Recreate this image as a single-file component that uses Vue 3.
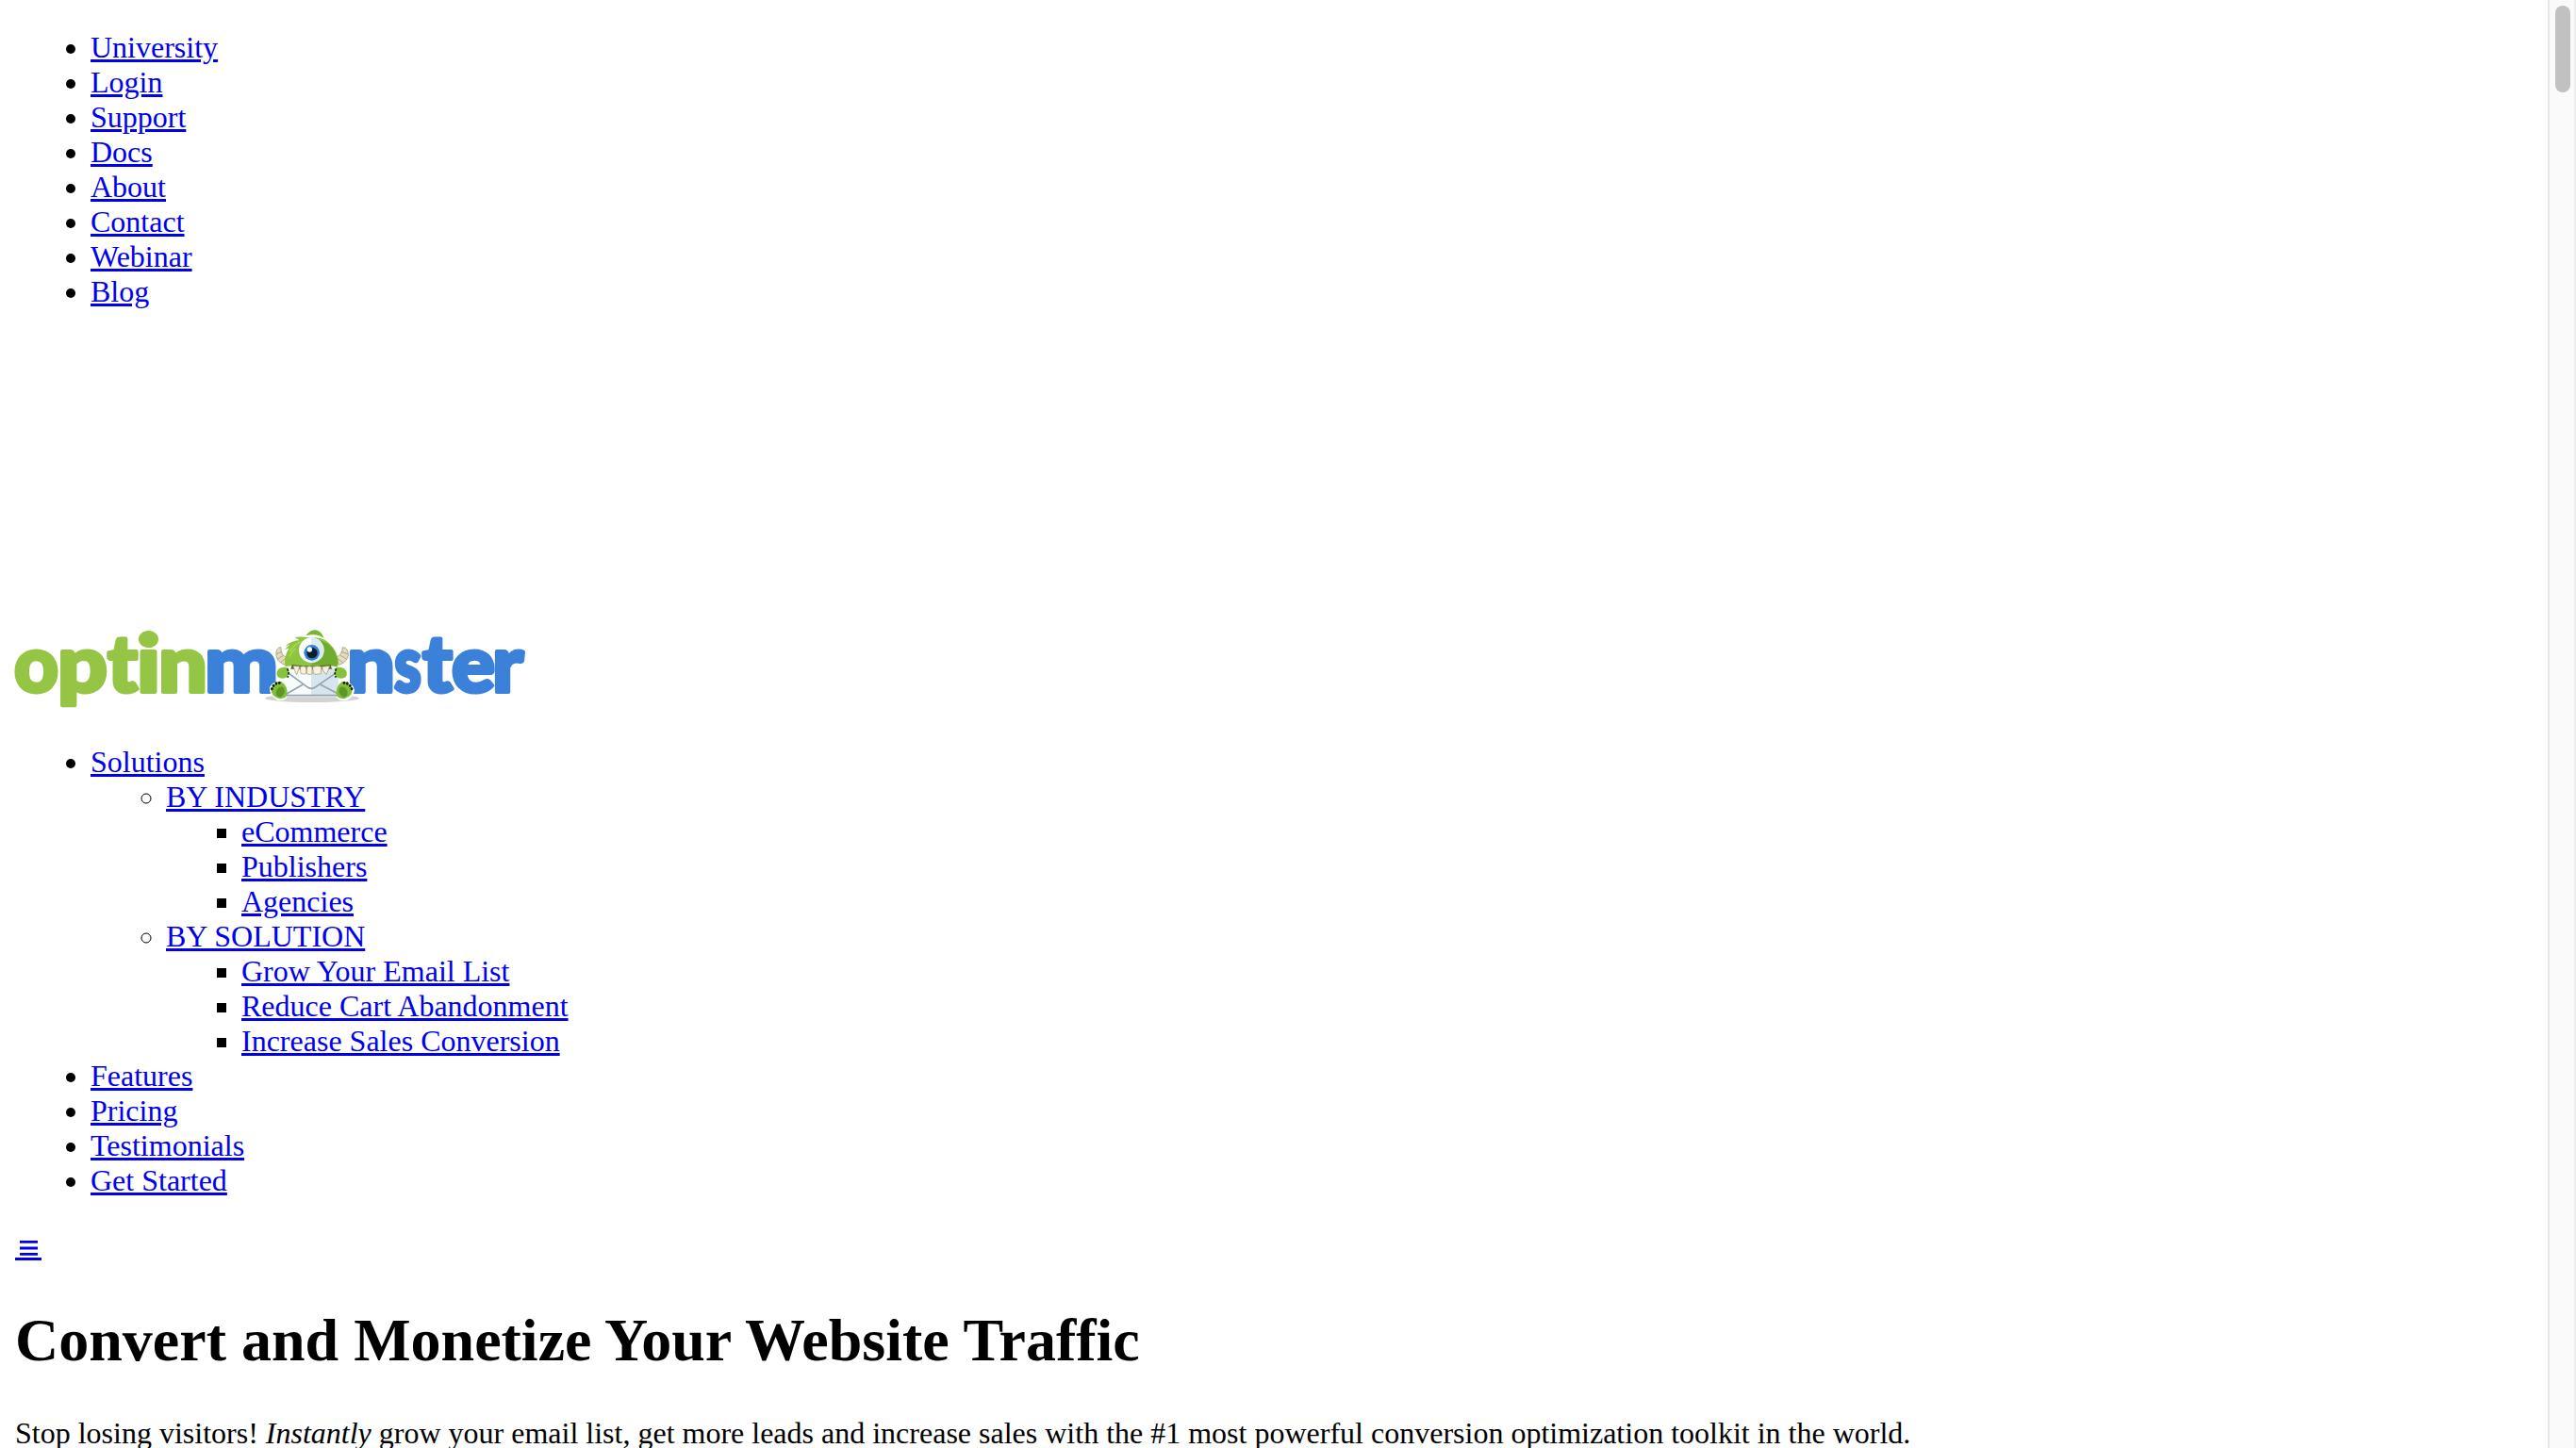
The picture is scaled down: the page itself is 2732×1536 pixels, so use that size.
<script setup>
const topLinks = ['University', 'Login', 'Support', 'Docs', 'About', 'Contact', 'Webinar', 'Blog']

const mainLinks = [
  {
    label: 'Solutions',
    groups: [
      { label: 'BY INDUSTRY', items: ['eCommerce', 'Publishers', 'Agencies'] },
      { label: 'BY SOLUTION', items: ['Grow Your Email List', 'Reduce Cart Abandonment', 'Increase Sales Conversion'] }
    ]
  },
  { label: 'Features' },
  { label: 'Pricing' },
  { label: 'Testimonials' },
  { label: 'Get Started' }
]

// x and advance of every wordmark letter
const letters = [
  { c: 'o', x: 15, w: 47, green: true },
  { c: 'p', x: 61, w: 53, green: true },
  { c: 't', x: 114, w: 32, green: true },
  { c: 'i', x: 145, w: 25, green: true },
  { c: 'n', x: 168, w: 52, green: true },
  { c: 'm', x: 217, w: 78 },
  { c: 'n', x: 368, w: 51 },
  { c: 's', x: 418, w: 29 },
  { c: 't', x: 448, w: 32 },
  { c: 'e', x: 479, w: 46 },
  { c: 'r', x: 522, w: 33 }
]
</script>

<template>
  <div class="window">
    <main class="page">
      <ul class="top-nav">
        <li v-for="l in topLinks" :key="l"><a href="#">{{ l }}</a></li>
      </ul>

      <a class="logo" href="#" aria-label="OptinMonster">
        <svg viewBox="16 660 544 96" width="544" height="96">
          <g class="word">
            <text
              v-for="(l, i) in letters"
              :key="i"
              :x="l.x"
              y="734"
              :textLength="l.w"
              lengthAdjust="spacingAndGlyphs"
              :class="{ green: l.green }"
            >{{ l.c }}</text>
          </g>
          <g transform="translate(270 660) scale(.33333)">
            <ellipse cx="183" cy="242" rx="150" ry="13" fill="#d2d2d2" />
            <path d="M66 84Q70 74 84 78L98 98Q102 60 128 46L162 42Q190 10 222 52Q252 66 264 98L276 78Q292 74 300 100Q300 130 276 144Q296 150 296 166Q294 182 280 188Q314 190 318 216Q312 252 276 250Q262 244 260 238H104Q94 254 72 248Q44 230 48 208Q56 188 82 190Q64 176 70 158Q78 142 94 144Q58 124 66 84Z" fill="#fff" />
            <path d="M102 146H266V234H102Z" fill="#f8fbfc" />
            <path d="M180 146H266V234H180Z" fill="#d7e6ee" />
            <path d="M102 233H266M102 228L153 199M266 228L210 199M102 158L166 205Q181 217 196 205L264 158" fill="none" stroke="#93a4ac" stroke-width="5" />
            <path d="M84 80Q66 80 69 106Q72 128 97 136L100 112Q82 102 84 80ZM280 80Q298 80 298 106Q294 128 268 136L260 112Q280 102 280 80Z" fill="#e3dcbd" stroke="#8f8868" stroke-width="2" />
            <path d="M69 101L86 95M73 117L92 106M84 128L98 115M297 101L277 95M293 117L273 106M281 129L263 115" stroke="#a39a78" stroke-width="2.5" />
            <path d="M163 43Q178 22 195 25Q212 28 221 51Q198 33 163 43Z" fill="#79b530" />
            <path d="M97 141Q92 112 109 83L96 87L112 71L97 77Q115 59 143 57L127 48Q151 45 178 50Q222 42 250 81Q270 108 265 143L244 139H120Z" fill="#8cc63f" />
            <path d="M211 58Q253 76 261 110Q268 124 263 139H219Q200 136 178 137L201 115Z" fill="#70ac2e" />
            <path d="M112 93Q128 68 150 62M111 110Q119 91 132 83" fill="none" stroke="#a9d64c" stroke-width="5" />
            <ellipse cx="181" cy="89" rx="40" ry="40" fill="#fff" />
            <path d="M180 49A40 40 0 0 1 180 129Z" fill="#dcebf2" />
            <circle cx="182" cy="97" r="25" fill="#2f80de" />
            <circle cx="183" cy="98" r="17" fill="#101d28" />
            <circle cx="175" cy="87" r="8" fill="#fff" />
            <path d="M119 135Q181 142 242 135L246 149H115Z" fill="#5c6428" />
            <path d="M123 139L144 141L139 153L134 167L128 155ZM145 142Q155 138 164 142V164Q154 167 147 163ZM166 142Q175 138 183 142V165Q175 168 167 165ZM185 142Q201 137 213 142L211 164Q196 168 187 164ZM214 142L239 139L234 154L228 167L218 154Z" fill="#f7f2de" stroke="#9c8e62" stroke-width="2" />
            <path d="M107 146Q91 140 78 148Q65 160 74 174Q88 184 104 174Q113 163 107 146ZM257 146Q273 140 286 148Q299 160 290 174Q276 184 260 174Q251 163 257 146Z" fill="#86c23b" />
            <path d="M104 148Q112 164 105 176M260 148Q252 164 259 176" fill="none" stroke="#14220c" stroke-width="5" stroke-dasharray="7 5" />
            <path d="M54 210Q63 187 85 189Q108 204 103 232Q96 246 77 243Q50 234 54 210ZM310 210Q301 187 279 189Q256 204 261 232Q268 246 287 243Q314 234 310 210Z" fill="#83be38" />
            <ellipse cx="82" cy="222" rx="13" ry="17" fill="#5f962a" transform="rotate(25 82 222)" />
            <ellipse cx="282" cy="222" rx="13" ry="17" fill="#5f962a" transform="rotate(-25 282 222)" />
            <g fill="#14220c">
              <ellipse cx="55" cy="212" rx="4" ry="5" /><ellipse cx="60" cy="202" rx="4" ry="5" />
              <ellipse cx="69" cy="195" rx="4" ry="5" /><ellipse cx="79" cy="193" rx="4" ry="5" />
              <ellipse cx="309" cy="212" rx="4" ry="5" /><ellipse cx="304" cy="202" rx="4" ry="5" />
              <ellipse cx="295" cy="195" rx="4" ry="5" /><ellipse cx="285" cy="193" rx="4" ry="5" />
            </g>
          </g>
        </svg>
      </a>

      <ul class="main-nav">
        <li v-for="l in mainLinks" :key="l.label">
          <a href="#">{{ l.label }}</a>
          <ul v-if="l.groups">
            <li v-for="g in l.groups" :key="g.label">
              <a href="#">{{ g.label }}</a>
              <ul>
                <li v-for="i in g.items" :key="i"><a href="#">{{ i }}</a></li>
              </ul>
            </li>
          </ul>
        </li>
      </ul>

      <a class="menu" href="#" aria-label="Menu">
        <svg width="28" height="24" viewBox="0 0 28 24">
          <path d="M5 4.4H24M5 11H24M5 17.4H24" stroke="#0000ee" stroke-width="2.8" />
          <path d="M0 22.5H28" stroke="#0000ee" stroke-width="3" />
        </svg>
      </a>

      <h1>Convert and Monetize Your Website Traffic</h1>
      <p>Stop losing visitors! <em>Instantly</em> grow your email list, get more leads and increase sales with the #1 most powerful conversion optimization toolkit in the world.</p>
    </main>
    <div class="scrollbar"><div class="thumb"></div></div>
  </div>
</template>

<style>
body {
  margin: 0;
  overflow: hidden;
}
</style>

<style scoped>
.window {
  display: flex;
  height: 1536px;
  overflow: hidden;
  background: #fff;
  color: #000;
  font: 32px/37px "Liberation Serif", "Times New Roman", serif;
}
.page {
  flex: 1;
  padding: 32px 16px 0;
}
ul {
  margin: 0;
  padding-left: 80px;
}
a {
  color: #0000ee;
  text-decoration: underline;
}
.logo {
  display: block;
  height: 96px;
  margin: 332px 0 34px;
}
.logo svg,
.menu svg {
  display: block;
  overflow: visible;
}
.word text {
  font: 900 83px Lato, sans-serif;
  fill: #3b80d9;
  stroke: #3b80d9;
  stroke-width: 4;
  stroke-linejoin: round;
}
.word text.green {
  fill: #95c544;
  stroke: #95c544;
}
.menu {
  display: block;
  width: 28px;
  height: 24px;
  margin: 42px 0 48px;
}
h1 {
  margin: 0 0 43px;
  font-size: 64px;
  line-height: 74px;
}
p {
  margin: 0;
}
.scrollbar {
  box-sizing: border-box;
  width: 30px;
  padding: 6px 4px 0 6px;
  background: #fafafa;
  border-left: 2px solid #e8e8e8;
  border-right: 2px solid #ededed;
}
.thumb {
  width: 16px;
  height: 92px;
  border-radius: 8px;
  background: #c1c1c1;
}
</style>
